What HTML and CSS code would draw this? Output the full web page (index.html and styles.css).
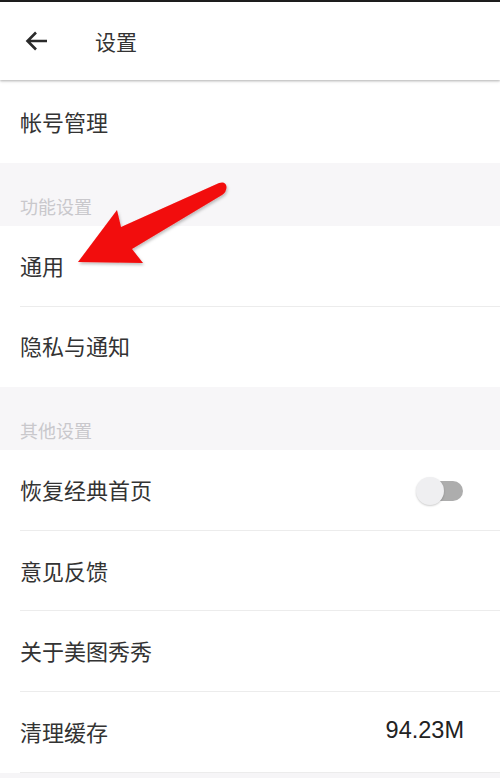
FILE: index.html
```html
<!DOCTYPE html>
<html lang="zh-CN">
<head>
<meta charset="utf-8">
<title>设置</title>
<link rel="stylesheet" href="styles.css">
</head>
<body>
<div class="page">
  <div class="statusline"></div>
  <header class="header">
    <span class="back">
      <svg width="24" height="24" viewBox="0 0 24 24"><path d="M22 12H3M11 3.5L2.5 12L11 20.5" fill="none" stroke="#2a2a2a" stroke-width="2.6" stroke-linecap="butt" stroke-linejoin="miter"/></svg>
    </span>
    <span class="title">设置</span>
  </header>
  <div class="row first"><span class="label">帐号管理</span></div>
  <div class="section"><span class="section-label">功能设置</span></div>
  <div class="row"><span class="label">通用</span></div>
  <div class="row last"><span class="label">隐私与通知</span></div>
  <div class="section"><span class="section-label">其他设置</span></div>
  <div class="row"><span class="label">恢复经典首页</span><span class="toggle"><span class="knob"></span></span></div>
  <div class="row"><span class="label">意见反馈</span></div>
  <div class="row"><span class="label">关于美图秀秀</span></div>
  <div class="row"><span class="label">清理缓存</span><span class="value">94.23M</span></div>
  <svg class="annot" width="500" height="300" viewBox="0 0 500 300">
    <defs>
      <filter id="sh" x="-20%" y="-20%" width="140%" height="140%">
        <feDropShadow dx="1" dy="2" stdDeviation="1.5" flood-color="#000" flood-opacity="0.25"/>
      </filter>
    </defs>
    <path d="M78 262 L117 210 L121 227 L219 183 Q226 181 226.5 187 Q226.5 192 222 195 L132 249 L143 263 Z" fill="#f20b0b" filter="url(#sh)"/>
  </svg>
</div>
</body>
</html>
```
FILE: styles.css
```css
* { box-sizing: border-box; }
html, body { margin: 0; padding: 0; background: #f6f5f7; }
body { font-family: "Noto Sans CJK SC", "Noto Sans", sans-serif; color: #333; }
.page { position: relative; width: 500px; height: 778px; overflow: hidden; background: #f6f5f7; }
.statusline { height: 2px; background: #1e1e1e; }
.header {
  height: 78px; background: #fff; display: flex; align-items: center;
  padding-left: 25px; position: relative; z-index: 2;
  box-shadow: 0 1px 2px rgba(0,0,0,0.22), 0 2px 3px rgba(0,0,0,0.08);
}
.back { width: 24px; height: 24px; display: flex; }
.title { margin-left: 46px; font-size: 21px; color: #333; line-height: 24px; }
.row {
  height: 80.6px; background: #fff; display: flex; align-items: center;
  justify-content: space-between; padding: 0 35px 3px 20px; position: relative;
}
.row::after {
  content: ""; position: absolute; left: 20px; right: 0; bottom: 0; height: 1px; background: #ececec;
}
.row.first { height: 83px; padding-top: 1px; }
.row.first::after, .row.last::after { display: none; }
.label { font-size: 22px; line-height: 28px; color: #333; }
.section { height: 63px; background: #f7f6f8; padding: 31px 0 0 20px; }
.section-label { font-size: 18px; line-height: 24px; color: #c9c8cc; }
.value { font-family: "Liberation Sans", Arial, sans-serif; font-size: 23.5px; color: #222; margin-right: 1px; }
.toggle { position: relative; width: 42px; height: 20px; border-radius: 10px; background: #adadad; margin-right: 2px; margin-top: 5px; }
.knob {
  position: absolute; left: -5px; top: -4px; width: 28px; height: 28px; border-radius: 50%;
  background: #efeff1; box-shadow: 0 1px 2px rgba(0,0,0,0.2);
}
.annot { position: absolute; left: 0; top: 0; z-index: 5; }
```
